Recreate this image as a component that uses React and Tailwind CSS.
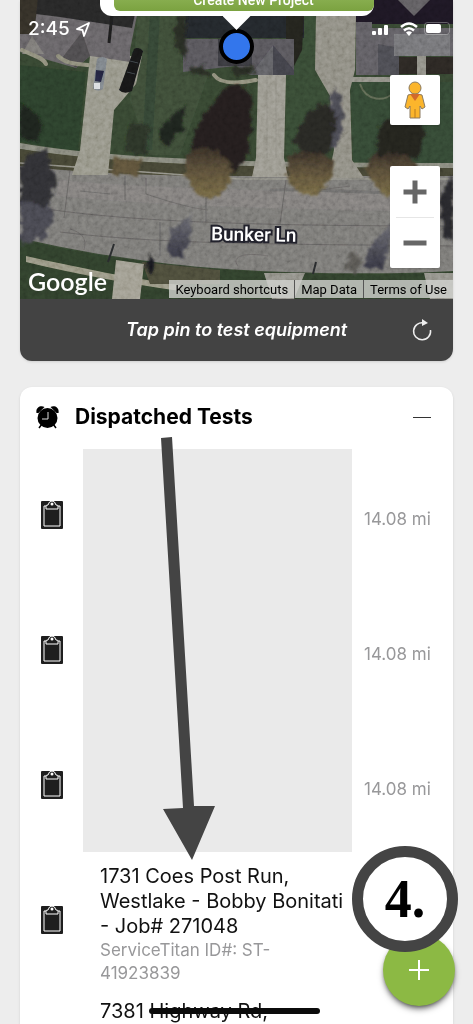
import { useState } from "react";

const tests = [
  { id: 1, distance: "14.08 mi" },
  { id: 2, distance: "14.08 mi" },
  { id: 3, distance: "14.08 mi" },
];

function SatelliteImage() {
  return (
    <svg
      className="absolute inset-0 h-full w-full"
      viewBox="20 0 433 299"
      preserveAspectRatio="xMidYMid slice"
      aria-hidden="true"
    >
      <defs>
        <filter id="grain" x="0" y="0" width="100%" height="100%">
          <feTurbulence type="fractalNoise" baseFrequency="0.22" numOctaves="3" seed="4" />
          <feColorMatrix values="0.9 0 0 0 0  0.9 0 0 0 0  0.9 0 0 0 0  0 0 0 0 1" />
        </filter>
        <filter id="rough" x="-20%" y="-20%" width="140%" height="140%">
          <feTurbulence type="fractalNoise" baseFrequency="0.15" numOctaves="3" seed="8" result="n" />
          <feDisplacementMap in="SourceGraphic" in2="n" scale="10" xChannelSelector="R" yChannelSelector="G" />
          <feGaussianBlur stdDeviation="1" />
        </filter>
        <filter id="soft">
          <feGaussianBlur stdDeviation="0.6" />
        </filter>
        <linearGradient id="tree" x1="0" y1="0" x2="0" y2="1">
          <stop offset="0" stopColor="#332b24" />
          <stop offset="0.4" stopColor="#544935" />
          <stop offset="1" stopColor="#706441" />
        </linearGradient>
        <linearGradient id="bare" x1="0" y1="0" x2="0" y2="1">
          <stop offset="0" stopColor="#64646a" />
          <stop offset="1" stopColor="#34343f" />
        </linearGradient>
      </defs>

      <rect x="20" y="0" width="433" height="299" fill="#34432f" />

      <g filter="url(#soft)">
        {/* lawns */}
        <path d="M20 65L86 72L78 152L20 142Z" fill="#2b3e29" />
        <path d="M138 14H184L182 60L210 70L180 155H150L130 100Z" fill="#3a4a36" />
        <path d="M150 14H160L152 150H142Z" fill="#324231" />
        <path d="M304 15H316V68L330 96L320 160H286V72Z" fill="#354630" />
        <path d="M350 82H453V165H353Z" fill="#334530" />
        <path d="M360 84C366 102 386 102 394 92" stroke="#5a6350" strokeWidth="2" fill="none" />

        {/* sidewalk and verge */}
        <path d="M20 143C120 160 260 163 453 163V168C260 168 120 166 20 149Z" fill="#818277" />
        <path d="M20 149C120 165 260 168 453 168V179H20Z" fill="#434331" />

        {/* road */}
        <path d="M20 166C60 170 120 176 240 176H453V271C370 276 250 272 190 266C130 260 70 250 20 238Z" fill="#767472" />
        <path d="M60 180C160 190 300 190 453 196V212C300 210 160 206 56 196Z" fill="#7b7977" />
        <path d="M270 190C330 188 400 196 453 194" stroke="#6a6967" strokeWidth="3" fill="none" />
        <path d="M40 208C130 222 260 226 453 226M60 232C170 246 330 244 453 246M70 170L64 218M125 176V200M206 190V222M286 180L280 224M160 222V256" stroke="#575655" strokeWidth="0.7" fill="none" />
        <path d="M146 178V194C170 202 190 208 208 210M80 191L110 194M70 229C86 234 86 242 84 250M238 266C230 256 246 252 268 256M320 190L350 186" stroke="#5a5958" strokeWidth="0.6" fill="none" />
        <path d="M20 163L240 179H453" stroke="#8c8b82" strokeWidth="1.5" fill="none" />

        {/* south side */}
        <path d="M20 239C70 252 140 262 190 267C250 273 370 277 453 272V299H20Z" fill="#2d3d29" />
        <path d="M26 256C80 268 130 278 180 285V291C130 284 80 275 26 262Z" fill="#94927f" />
        <path d="M142 262L220 270V284H150Z" fill="#4a4839" />
        <path d="M116 260L144 264L140 299H112Z" fill="#9c998c" />
        <path d="M264 273H305L294 299H272ZM424 273H453V299H430Z" fill="#8e8d85" />

        {/* driveways */}
        <path d="M90 56L142 56L136 84L114 110L108 175H72L80 150Z" fill="#929184" />
        <path d="M258 75H286L284 158L288 177H252L256 158Z" fill="#96948a" />
        <path d="M267 76V158M276 76V158" stroke="#8a887f" strokeWidth="1" />
        <path d="M316 14H356L355 70L350 90L352 160L364 178H328L334 150L330 96L315 70Z" fill="#8a887e" />
        <path d="M350 77H392V82H350ZM417 55H426V76H417Z" fill="#8b8a81" />

        {/* roofs */}
        <path d="M20 0H140L130 50V62L90 56L76 68L20 52Z" fill="#646163" />
        <path d="M36 0H138L132 28L60 17L36 14Z" fill="#262628" />
        <path d="M20 0H38L34 34H20Z" fill="#302d27" />
        <path d="M82 32L90 56L76 68L62 58Z" fill="#4c494b" />
        <path d="M32 36L44 54H22Z" fill="#777472" />
        <path d="M112 14L109 43" stroke="#1b1b1d" strokeWidth="3" />
        <path d="M186 16H304V38H182Z" fill="#22252c" />
        <path d="M183 39H294V75H250L236 66L183 72Z" fill="#545359" />
        <path d="M218 39H252V66H218Z" fill="#37373d" />
        <path d="M273 45L294 70V75H250Z" fill="#403f46" />
        <path d="M273 45V75H250Z" fill="#5c5b60" />
        <path d="M286 16H304L302 50L294 66V39H286Z" fill="#20221f" />
        <path d="M356 0H453V24H356Z" fill="#1c1923" />
        <path d="M398 0H430L414 16Z" fill="#5c5a5d" />
        <path d="M356 22H372V28H453V56H399V75H356Z" fill="#5b5a5f" />
        <path d="M378 44V75H399V48Z" fill="#4a494f" />
        <path d="M394 34H450V56H394Z" fill="#706f73" />
        <path d="M399 57H417V74H399ZM426 57H453V74H426Z" fill="#2b2822" />

        {/* garden edging */}
        <path d="M22 50C34 56 44 58 46 64M58 56C64 62 72 64 88 65M214 75C220 84 236 84 256 80" stroke="#8a8977" strokeWidth="4" fill="none" strokeLinecap="round" />
      </g>

      {/* trees and shadows */}
      <g filter="url(#rough)">
        <path d="M20 104L34 112L42 124L38 142L20 138Z" fill="#1e241a" />
        <path d="M26 158L46 148L56 180L48 206L20 206V166Z" fill="#2e2d33" />
        <path d="M20 202L46 206L56 214L44 238L20 246Z" fill="#45444d" />
        <path d="M186 104L183 128L168 146L158 136L166 122Z" fill="#1e201c" />
        <path d="M232 84C256 80 256 110 246 158L232 174H196L192 144C196 122 212 100 232 84Z" fill="#231f1b" />
        <path d="M188 154C200 142 226 148 232 168C230 190 218 200 206 198C192 194 180 174 188 154Z" fill="url(#tree)" />
        <path d="M334 88L342 98L344 130L334 150L322 140Z" fill="#474650" />
        <path d="M324 104L336 112L330 152C314 160 300 156 294 142C298 122 312 106 324 104Z" fill="#272524" />
        <path d="M290 156C300 148 326 150 334 162C332 184 322 196 306 195C292 192 282 176 290 156Z" fill="url(#tree)" />
        <path d="M378 130C388 110 416 108 426 128L420 158H376Z" fill="#24241f" />
        <path d="M368 158C384 150 410 152 416 164V196H390C376 190 364 178 368 158Z" fill="url(#tree)" />
        <path d="M130 120L148 126L146 156L124 150Z" fill="#2a3326" />
        <path d="M114 158L142 160L136 176L112 174Z" fill="#5a5039" />
        <path d="M192 213L190 240L182 258L168 256L170 232Z" fill="url(#bare)" />
        <path d="M392 224L384 268L362 268L372 244Z" fill="url(#bare)" />
        <path d="M354 250L362 262L356 274L344 268Z" fill="#55534f" />
        <path d="M453 174L440 196L444 238L453 240Z" fill="#27262b" />
        <path d="M176 20L186 14V60L174 46ZM188 66L206 68L210 76L192 74ZM232 68L254 66L252 76L234 76Z" fill="#252b20" />
        <path d="M150 254L156 264L150 276L145 270Z" fill="#17191b" />
      </g>
      <path d="M114 244L108 262M316 262L313 274" stroke="#26282a" strokeWidth="2" />

      {/* parked cars */}
      <g filter="url(#soft)">
        <path d="M97 59Q102 55 107 59L103 89Q97 93 93 88Z" fill="#777d83" />
        <path d="M96 70L104 71L101 82L95 81Z" fill="#20243c" />
        <path d="M94 83H100V89H94Z" fill="#dadde0" />
        <path d="M134 49Q139 46 143 51L132 91Q124 95 119 90Z" fill="#131416" />
        <path d="M130 61L138 63M127 72L135 74" stroke="#3f4246" strokeWidth="1" />
      </g>

      <rect x="20" y="0" width="433" height="299" filter="url(#grain)" opacity="0.24" style={{ mixBlendMode: "overlay" }} />
    </svg>
  );
}

function Pegman() {
  return (
    <svg width="22" height="38" viewBox="0 0 22 38" aria-hidden="true">
      <g fill="#fbb52c" stroke="#8b7b60" strokeWidth="1">
        <path d="M4 14Q11 11 18 14L21 26L18 28L16 25V37H6V25L4 28L1 26Z" />
        <circle cx="11" cy="7" r="6" />
      </g>
      <path d="M6 13H16L11 20Z" fill="#d3692b" />
      <path d="M11 28V37" stroke="#b97b1c" strokeWidth="1" />
    </svg>
  );
}

function StatusBar() {
  return (
    <div className="absolute inset-x-0 top-[20px] flex h-[18px] items-center justify-between pr-[2px] pl-2 font-[Inter,sans-serif] text-white">
      <div className="flex items-center gap-[6px]">
        <span className="text-[19px] leading-[18px] font-medium">2:45</span>
        <svg width="14" height="15" viewBox="0 0 14 15" fill="none" stroke="currentColor" strokeWidth="1.8" strokeLinejoin="round" aria-hidden="true">
          <path d="M13 1L1 7L6.500 8L8 14Z" />
        </svg>
      </div>
      <div className="flex items-center gap-[6px]">
        <svg width="22" height="14" viewBox="0 0 22 14" fill="currentColor" aria-hidden="true">
          <rect x="0" y="9" width="4" height="4" rx="1" />
          <rect x="6" y="6" width="4" height="7" rx="1" />
          <rect x="12" y="3" width="4" height="10" rx="1" />
        </svg>
        <svg width="18" height="14" viewBox="0 0 18 14" fill="none" stroke="currentColor" strokeWidth="2.400" aria-hidden="true">
          <path d="M1 5Q9 -2 17 5M4 8.500Q9 4 14 8.500" />
          <path d="M6 10.500Q9 8 12 10.500L9 14Z" fill="currentColor" stroke="none" />
        </svg>
        <svg width="27" height="14" viewBox="0 0 27 14" aria-hidden="true">
          <rect x="0.500" y="0.500" width="25" height="12" rx="3" fill="none" stroke="currentColor" opacity="0.3" />
          <rect x="2" y="2" width="15" height="9" rx="2" fill="currentColor" />
        </svg>
      </div>
    </div>
  );
}

function AlarmIcon() {
  return (
    <svg width="23" height="23" viewBox="0 0 23 23" aria-hidden="true">
      <path d="M6 18L3 22M17 18L20 22" stroke="#000" strokeWidth="1.500" />
      <path d="M0.500 7C-0.500 2 4 -1 8.500 1L6.500 3L2.500 7ZM22.500 7C23.500 2 19 -1 14.500 1L16.500 3L20.500 7Z" />
      <circle cx="11.500" cy="12" r="10" />
      <path d="M12 6V13H6" fill="none" stroke="#ddd" strokeWidth="1" />
    </svg>
  );
}

function ClipboardIcon() {
  return (
    <svg width="24" height="30" viewBox="0 0 24 30" aria-hidden="true">
      <rect x="1" y="1" width="22" height="28" rx="1" fill="#1e1e1e" />
      <path d="M7 6H4V26H20V6H17" fill="none" stroke="#fff" strokeWidth="1" />
      <path d="M6 9V6Q6 5 8 5Q9 1 12 1Q15 1 16 5Q18 5 18 6V9Z" fill="#1e1e1e" stroke="#fff" strokeWidth="1" />
      <circle cx="12" cy="4" r="1.500" fill="#fff" />
    </svg>
  );
}

function MapCard() {
  return (
    <section className="overflow-hidden rounded-b-xl bg-[#434343] shadow">
      <div className="relative h-[299px] overflow-hidden font-[Roboto,sans-serif]">
        <SatelliteImage />

        {/* Info window and marker of the selected job */}
        <div className="absolute top-0 left-1/2 flex w-[270px] -translate-x-1/2 flex-col items-center">
          <div className="h-4 w-[274px] rounded-b-xl bg-white pl-[14px]">
            <button className="flex h-[11px] w-full items-end justify-center rounded-b-md bg-linear-to-b from-[#87ad4e] to-[#7ba240] text-[14px] leading-[18px] font-medium text-white">
              <span className="mb-[2px] pl-5">Create New Project</span>
            </button>
          </div>
          <div className="h-[14px] w-[28px] bg-white [clip-path:polygon(0_0,100%_0,50%_100%)]" />
          <button aria-label="Job location" className="-mt-px size-[35px] rounded-full border-4 border-black bg-[#3376ec]" />
        </div>

        <StatusBar />

        <button aria-label="Street View" className="absolute top-[75px] right-[13px] flex size-[50px] items-center justify-center rounded-xs bg-white shadow">
          <Pegman />
        </button>
        <div className="absolute top-[166px] right-[13px] flex w-[50px] flex-col items-center rounded-xs bg-white shadow">
          <button aria-label="Zoom in" className="flex h-[51px] w-full items-center justify-center">
            <svg width="24" height="24" viewBox="0 0 24 24" fill="#666" aria-hidden="true">
              <path d="M9.500 0.500H14.500V9.500H23.500V14.500H14.500V23.500H9.500V14.500H0.500V9.500H9.500Z" />
            </svg>
          </button>
          <div className="h-px w-[38px] bg-[#e6e6e6]" />
          <button aria-label="Zoom out" className="flex h-[50px] w-full items-center justify-center">
            <svg width="24" height="24" viewBox="0 0 24 24" fill="#666" aria-hidden="true">
              <path d="M0.500 9.500H23.500V14.500H0.500Z" />
            </svg>
          </button>
        </div>

        <span className="absolute top-[224px] left-[191px] rotate-1 text-[19px] leading-[22px] font-medium text-white [paint-order:stroke] [-webkit-text-stroke:4px_#22222c]">
          Bunker Ln
        </span>
        <a href="#google" className="absolute bottom-[3px] left-2 font-[Lato,sans-serif] text-[25px] leading-[30px] font-semibold text-white">
          Google
        </a>
        <div className="absolute right-0 bottom-px flex h-[18px] divide-x divide-[#555] bg-[#d2d3cf]/80 text-[13px] leading-[19px] text-black">
          <a href="#keys" className="px-[6px]">Keyboard shortcuts</a>
          <a href="#data" className="px-[6px]">Map Data</a>
          <a href="#terms" className="px-[6px]">Terms of Use</a>
        </div>
      </div>

      <div className="flex h-[62px] items-center justify-between pr-5 pl-[42px]">
        <p className="flex-1 text-center text-[18px] leading-6 font-semibold text-white italic">
          Tap pin to test equipment
        </p>
        <button aria-label="Refresh">
          <svg width="22" height="24" viewBox="0 0 22 24" fill="none" stroke="#eee" strokeWidth="1.500" aria-hidden="true">
            <path d="M13 5A8.500 8.500 0 1 0 19.500 12" />
            <path d="M11 1L17 5L11 8Z" fill="#eee" stroke="none" />
          </svg>
        </button>
      </div>
    </section>
  );
}

function DispatchedTests() {
  const [open, setOpen] = useState(true);

  return (
    <section className="relative mt-[26px] rounded-t-xl bg-white shadow">
      <header className="flex h-[60px] items-center pr-[22px] pl-4">
        <AlarmIcon />
        <h2 className="ml-4 flex-1 text-[21px] leading-7 font-bold text-black">
          Dispatched Tests
        </h2>
        <button aria-label="Collapse" onClick={() => setOpen(!open)} className="flex h-6 items-center">
          <span className="h-px w-[18px] bg-[#333]" />
        </button>
      </header>

      {open && (
        <>
          <div className="grid grid-cols-[63px_1fr_101px] grid-rows-[repeat(3,135px)]">
            <div className="col-start-2 row-span-3 row-start-1 mt-[2px] bg-[#eaeaea]" />
            {tests.map((test) => (
              <div key={test.id} className="col-start-1 flex items-center pl-5">
                <ClipboardIcon />
              </div>
            ))}
            <div className="col-start-3 row-span-3 row-start-1 grid grid-rows-3">
              {tests.map((test) => (
                <span key={test.id} className="flex items-center pt-2 pl-3 text-[17px] leading-6 text-[#98989a]">
                  {test.distance}
                </span>
              ))}
            </div>
          </div>

          <div className="flex pl-5">
            <div className="flex items-center">
              <ClipboardIcon />
            </div>
            <div className="pt-3 pb-[2px] pl-9">
              <p className="text-[20px] leading-[25px] text-[#111]">
                1731 Coes Post Run,
                <br />
                Westlake - Bobby Bonitati
                <br />- Job# 271048
              </p>
              <p className="text-[17px] leading-[23px] text-[#98989a]">
                ServiceTitan ID#: ST-
                <br />
                41923839
              </p>
            </div>
          </div>

          <div className="pt-3 pl-20 text-[20px] leading-[25px] text-[#111]">
            7381{" "}
            <span className="relative inline-block">
              Highway Rd,
              <span className="absolute top-[9px] left-0 h-[6px] w-[171px] rounded-full bg-[#0b0b0b]" />
            </span>
          </div>

          {/* Arrow from the heading to the job */}
          <svg className="pointer-events-none absolute top-[50px] left-[140px]" width="58" height="424" viewBox="160 437 58 424" fill="#444" aria-hidden="true">
            <path d="M161 438L172 437L194 806L215 806L192 860L163 809L183 808Z" />
          </svg>
        </>
      )}
    </section>
  );
}

export default function App() {
  return (
    <main className="relative h-screen overflow-hidden bg-[#ededed] px-5 font-[Inter,'Liberation_Sans',sans-serif]">
      <MapCard />
      <DispatchedTests />

      <button aria-label="Add" className="absolute right-[18px] bottom-[18px] flex size-[72px] items-center justify-center rounded-full bg-[#8cb944] shadow-md shadow-black/50">
        <svg width="20" height="20" viewBox="0 0 20 20" stroke="#fff" strokeWidth="2" aria-hidden="true">
          <path d="M10 0V20M0 10H20" />
        </svg>
      </button>
      <div className="absolute right-[15px] bottom-[72px] flex size-[106px] items-center justify-center rounded-full border-[11px] border-[#444] bg-white font-['Liberation_Serif',serif] text-[54px] leading-none font-bold text-black">
        4.
      </div>
    </main>
  );
}
